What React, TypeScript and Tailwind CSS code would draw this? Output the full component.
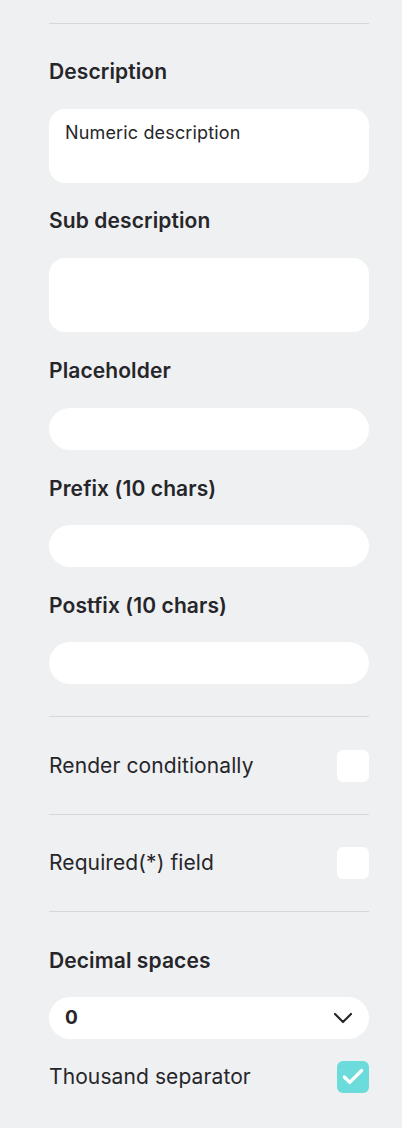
import { Check, ChevronDown } from 'lucide-react';

const font = { fontFamily: 'Inter, "Noto Sans", sans-serif' };

function Label({ children, className = '' }: { children: React.ReactNode; className?: string }) {
    return <div className={`text-[21px] leading-[28px] font-semibold tracking-[0.1px] text-[#26262a] ${className}`}>{children}</div>;
}

function Divider() {
    return <div className="h-px bg-[#d6d7da]" />;
}

function Toggle({ label, checked = false }: { label: string; checked?: boolean }) {
    return (
        <div className="flex items-center justify-between">
            <span className="text-[21px] leading-[28px] tracking-[0.1px] text-[#26262a]">{label}</span>
            {checked ? (
                <span className="w-8 h-8 rounded-[6px] bg-[#6bdbdb] flex items-center justify-center">
                    <Check className="w-[26px] h-[26px] text-white" strokeWidth={3} />
                </span>
            ) : (
                <span className="w-8 h-8 rounded-[6px] bg-white" />
            )}
        </div>
    );
}

export default function App() {
    return (
        <div className="min-h-[1128px] bg-[#eff0f2] pl-[49px] pr-[33px] pt-[23px]" style={font}>
            <Divider />

            {/* text fields */}
            <Label className="mt-[34px]">Description</Label>
            <div className="mt-[23px] h-[74px] rounded-[16px] bg-white px-4 pt-[10px] text-[18px] leading-[28px] tracking-[0.15px] text-[#26262a]">
                Numeric description
            </div>

            <Label className="mt-[24px]">Sub description</Label>
            <div className="mt-[23px] h-[74px] rounded-[16px] bg-white" />

            <Label className="mt-[25px]">Placeholder</Label>
            <div className="mt-[23px] h-[42px] rounded-full bg-white" />

            <Label className="mt-[25px]">Prefix (10 chars)</Label>
            <div className="mt-[22px] h-[42px] rounded-full bg-white" />

            <Label className="mt-[25px]">Postfix (10 chars)</Label>
            <div className="mt-[22px] h-[42px] rounded-full bg-white" />

            <div className="mt-[32px]">
                <Divider />
            </div>
            <div className="pt-[33px] pb-[32px]">
                <Toggle label="Render conditionally" />
            </div>
            <Divider />
            <div className="py-[32px]">
                <Toggle label="Required(*) field" />
            </div>
            <Divider />

            <Label className="mt-[35px]">Decimal spaces</Label>
            <div className="mt-[22px] h-[42px] rounded-full bg-white flex items-center justify-between pl-4 pr-[10px]">
                <span className="text-[19px] font-bold text-[#26262a]">0</span>
                <ChevronDown className="w-8 h-8 text-[#26262a]" strokeWidth={1.6} />
            </div>
            <div className="mt-[22px]">
                <Toggle label="Thousand separator" checked />
            </div>
        </div>
    );
}
